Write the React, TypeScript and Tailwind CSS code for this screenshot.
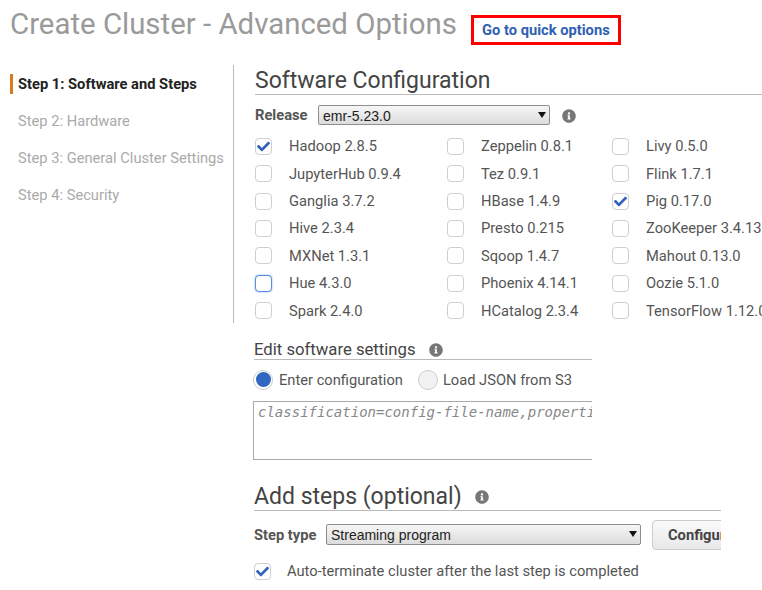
import React from 'react';
import { FaInfoCircle, FaCheck } from 'react-icons/fa';

const steps = [
  'Step 1: Software and Steps',
  'Step 2: Hardware',
  'Step 3: General Cluster Settings',
  'Step 4: Security',
];

const apps: { name: string; checked?: boolean; focused?: boolean }[][] = [
  [
    { name: 'Hadoop 2.8.5', checked: true },
    { name: 'JupyterHub 0.9.4' },
    { name: 'Ganglia 3.7.2' },
    { name: 'Hive 2.3.4' },
    { name: 'MXNet 1.3.1' },
    { name: 'Hue 4.3.0', focused: true },
    { name: 'Spark 2.4.0' },
  ],
  [
    { name: 'Zeppelin 0.8.1' },
    { name: 'Tez 0.9.1' },
    { name: 'HBase 1.4.9' },
    { name: 'Presto 0.215' },
    { name: 'Sqoop 1.4.7' },
    { name: 'Phoenix 4.14.1' },
    { name: 'HCatalog 2.3.4' },
  ],
  [
    { name: 'Livy 0.5.0' },
    { name: 'Flink 1.7.1' },
    { name: 'Pig 0.17.0', checked: true },
    { name: 'ZooKeeper 3.4.13' },
    { name: 'Mahout 0.13.0' },
    { name: 'Oozie 5.1.0' },
    { name: 'TensorFlow 1.12.0' },
  ],
];

const Checkbox = ({ checked, focused }: { checked?: boolean; focused?: boolean }) => (
  <span
    className={`flex h-[17px] w-[17px] shrink-0 items-center justify-center rounded-[4px] border bg-white ${
      focused ? 'border-[#5b8de0] shadow-[0_0_2px_#7aa5ea]' : 'border-[#cfcfcf]'
    }`}
  >
    {checked && <FaCheck className="text-[13px] text-[#2f62b8]" />}
  </span>
);

const Info = ({ className = '' }: { className?: string }) => (
  <FaInfoCircle className={`shrink-0 text-[14px] text-[#777] ${className}`} />
);

const SelectBox = ({ value, className = '' }: { value: string; className?: string }) => (
  <div className={`relative shrink-0 ${className}`}>
    <select
      defaultValue={value}
      className="h-full w-full appearance-none rounded-[2px] border border-[#8e8e8e] bg-gradient-to-b from-[#f6f6f6] to-[#dcdcdc] pl-[4px] font-['Liberation_Sans',sans-serif] text-[14px] text-[#222] outline-none"
    >
      <option>{value}</option>
    </select>
    <svg
      width="8"
      height="6"
      viewBox="0 0 8 6"
      className="pointer-events-none absolute right-[4px] top-[7px]"
    >
      <path d="M0 0H8L4 6Z" fill="#111" />
    </svg>
  </div>
);

export default function App() {
  return (
    <div className="h-[590px] w-[762px] overflow-hidden bg-white font-['Roboto',sans-serif] text-[14.7px] text-[#444]">
      {/* Page title */}
      <div className="flex h-[65px] items-start pl-[10px]">
        <h1 className="mt-[5px] whitespace-nowrap text-[29.4px] leading-[38px] text-[#9a9a9a]">
          Create Cluster - Advanced Options
        </h1>
        <a className="ml-[14px] mt-[15px] flex h-[30px] w-[150px] shrink-0 items-center justify-center border-[3px] border-[#f00] font-bold text-[#2f5fb3]">
          Go to quick options
        </a>
      </div>

      <div className="flex">
        {/* Wizard steps */}
        <div className="h-[258px] w-[234px] shrink-0 border-r border-[#bbb] pl-[10px] pt-[9px]">
          {steps.map((step, i) => (
            <div
              key={step}
              className={`mb-[17px] flex h-[20px] items-center whitespace-nowrap border-l-[3px] pl-[5px] ${
                i === 0 ? 'border-[#dd7b1c] font-bold text-[#222]' : 'border-transparent text-[#aaa]'
              }`}
            >
              {step}
            </div>
          ))}
        </div>

        <div className="min-w-0 flex-1 pl-[20px]">
          {/* Software configuration */}
          <div className="ml-[1px]">
            <h2 className="h-[30px] whitespace-nowrap border-b border-[#bbb] text-[23px] leading-[32px] text-[#444]">
              Software Configuration
            </h2>
            <div className="mt-[10px] flex h-[21px] items-center">
              <span className="w-[63px] shrink-0 font-bold text-[#555]">Release</span>
              <SelectBox value="emr-5.23.0" className="h-[20px] w-[232px] self-start" />
              <Info className="ml-[12px]" />
            </div>
            <div className="mt-[6.6px] flex w-[520px]">
              {apps.map((col, c) => (
                <div
                  key={c}
                  className={c === 0 ? 'w-[192px]' : c === 1 ? 'w-[165px]' : 'w-[163px]'}
                >
                  {col.map((app) => (
                    <div key={app.name} className="flex h-[27.4px] items-center">
                      <Checkbox checked={app.checked} focused={app.focused} />
                      <span className="ml-[17px] whitespace-nowrap text-[#555]">{app.name}</span>
                    </div>
                  ))}
                </div>
              ))}
            </div>
          </div>

          {/* Edit software settings */}
          <div className="mt-[14.4px] w-[338px]">
            <div className="flex h-[21px] items-center border-b border-[#bbb] pt-[2px]">
              <span className="whitespace-nowrap text-[16.7px] text-[#444]">Edit software settings</span>
              <Info className="ml-[13px]" />
            </div>
            <div className="-ml-[1px] mt-[10px] flex h-[20px] items-center whitespace-nowrap text-[#555]">
              <span className="flex h-[20px] w-[20px] shrink-0 items-center justify-center rounded-full border border-[#ccc] bg-white">
                <span className="h-[15px] w-[15px] rounded-full bg-[#2f66c0]" />
              </span>
              <span className="ml-[6px]">Enter configuration</span>
              <span className="ml-[15px] h-[20px] w-[20px] shrink-0 rounded-full border border-[#ccc] bg-[#f2f2f2]" />
              <span className="ml-[5px]">Load JSON from S3</span>
            </div>
            <div className="-ml-[1px] mt-[11px] w-[339px] overflow-hidden">
              <div className="h-[59px] w-[400px] border border-[#aaa] pl-[4px] pt-[2px] font-['DejaVu_Sans_Mono',monospace] text-[14px] italic leading-[17px] text-[#888]">
                <span className="whitespace-nowrap">classification=config-file-name,properties=[myKey1=myValue1]</span>
              </div>
            </div>
          </div>

          {/* Add steps */}
          <div className="mt-[22px] w-[467px] overflow-hidden">
            <div className="flex h-[29px] items-center border-b border-[#bbb] pt-[2px]">
              <h2 className="whitespace-nowrap text-[23px] leading-[30px] text-[#444]">Add steps (optional)</h2>
              <Info className="ml-[13px]" />
            </div>
            <div className="mt-[9px] flex h-[30px] items-center">
              <span className="w-[72px] shrink-0 font-bold text-[#555]">Step type</span>
              <SelectBox value="Streaming program" className="h-[21px] w-[315px]" />
              <button className="ml-[11px] h-[30px] w-[130px] shrink-0 rounded-[4px] border border-[#ccc] bg-gradient-to-b from-[#fafafa] to-[#e8e8e8] pl-[15px] text-left font-bold text-[#444]">
                Configure
              </button>
            </div>
            <div className="mt-[13px] flex h-[17px] items-center">
              <Checkbox checked />
              <span className="ml-[16px] whitespace-nowrap text-[#555]">
                Auto-terminate cluster after the last step is completed
              </span>
            </div>
          </div>
        </div>
      </div>
    </div>
  );
}
